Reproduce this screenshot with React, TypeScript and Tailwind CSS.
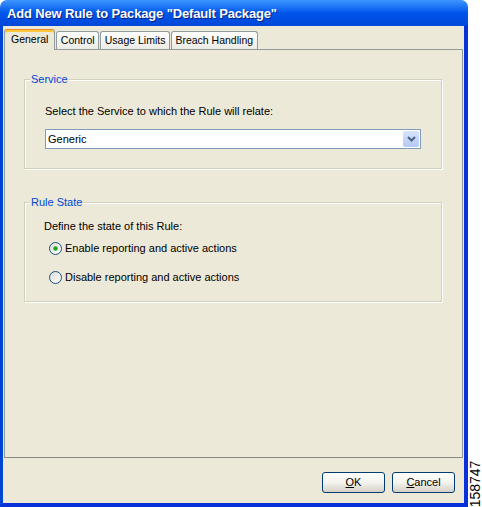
import React from "react";

const font = { fontFamily: '"Liberation Sans", Arial, sans-serif' };

function Radio({ checked }: { checked?: boolean }) {
  return (
    <svg width="13" height="13" viewBox="0 0 13 13" className="shrink-0">
      <defs>
        <linearGradient id={checked ? "rg1" : "rg2"} x1="0" y1="0" x2="1" y2="1">
          <stop offset="0" stopColor="#dcdcd5" />
          <stop offset="1" stopColor="#ffffff" />
        </linearGradient>
      </defs>
      <circle cx="6.5" cy="6.5" r="6" fill={`url(#${checked ? "rg1" : "rg2"})`} stroke="#1c5180" strokeWidth="1" />
      {checked && <circle cx="6.5" cy="6.5" r="2.2" fill="#21a121" />}
    </svg>
  );
}

function Group({ title, children, className }: { title: string; children: React.ReactNode; className?: string }) {
  return (
    <div className={"relative border border-[#d0d0bf] shadow-[inset_1px_1px_0_#ffffff,1px_1px_0_#ffffff] " + (className ?? "")}>
      <div className="absolute left-[5px] top-[-8px] bg-[#ece9d8] px-[1px] text-[11px] leading-[14px] text-[#0046d5]">{title}</div>
      {children}
    </div>
  );
}

function Tab({ label, active }: { label: string; active?: boolean }) {
  return active ? (
    <div className="relative z-10 -mb-px flex h-[21px] items-center rounded-t-[3px] border border-b-0 border-[#919b9c] border-t-[#e68b2c] bg-[#ece9d8] px-[6px] text-[10.5px] shadow-[inset_0_2px_0_#ffc73c]">
      {label}
    </div>
  ) : (
    <div className="mt-[2px] flex h-[18px] items-center rounded-t-[3px] border border-b-0 border-[#919b9c] bg-gradient-to-b from-[#ffffff] to-[#ecebe6] px-[3.5px] text-[10.5px]">
      {label}
    </div>
  );
}

function Btn({ children }: { children: React.ReactNode }) {
  return (
    <div className="flex h-[21px] w-[63px] items-center justify-center rounded-[3px] border border-[#003c74] bg-gradient-to-b from-[#ffffff] via-[#f4f3ee] to-[#d6d0c5] text-[11px]">
      {children}
    </div>
  );
}

export default function App() {
  return (
    <div className="flex h-[507px] w-[482px] bg-white text-black" style={font}>
      <div className="flex h-[507px] w-[468px] flex-col">
        <div className="flex h-[26px] shrink-0 items-center rounded-t-[7px] bg-gradient-to-b from-[#3d95ff] via-[#0055ea] to-[#0047d8] pl-[7px] pt-[1px]">
          <span className="text-[13px] font-bold tracking-[-0.15px] text-white [text-shadow:1px_1px_0_#0a1e7a]">
            Add New Rule to Package "Default Package"
          </span>
        </div>
        <div className="flex flex-1 flex-col border-x-[3px] border-b-[4px] border-x-[#0046d5] border-b-[#0831d9] border-r-[4px] border-r-[#0831d9] bg-[#ece9d8]">
          <div className="flex flex-col px-[1px] pt-[3px]">
            <div className="flex items-end">
              <Tab label="General" active />
              <div className="ml-[1px]"><Tab label="Control" /></div>
              <div className="ml-[1px]"><Tab label="Usage Limits" /></div>
              <div className="ml-[1px]"><Tab label="Breach Handling" /></div>
            </div>
            <div className="flex h-[409px] flex-col border border-[#919b9c] border-b-[#8a8a80] bg-[#ece9d8] pl-[19px] pr-[20px] pt-[29px]">
              <Group title="Service" className="h-[90px]">
                <div className="pl-[20px] pt-[24px] text-[11px] leading-[14px]">Select the Service to which the Rule will relate:</div>
                <div className="ml-[20px] mr-[20px] mt-[11px] flex h-[20px] items-center border border-[#7f9db9] bg-white">
                  <span className="flex-1 pl-[2px] text-[11px]">Generic</span>
                  <div className="mr-[1px] flex h-[16px] w-[16px] items-center justify-center rounded-[2px] bg-gradient-to-b from-[#d9e5fd] to-[#b4c8f6]">
                    <svg width="9" height="6" viewBox="0 0 9 6">
                      <path d="M1 1 L4.5 4.5 L8 1" fill="none" stroke="#4d6185" strokeWidth="2" />
                    </svg>
                  </div>
                </div>
              </Group>
              <Group title="Rule State" className="mt-[33px] h-[100px]">
                <div className="pl-[19px] pt-[16px] text-[11px] leading-[14px]">Define the state of this Rule:</div>
                <div className="mt-[8px] flex items-center gap-[3px] pl-[24px] text-[11px] leading-[14px]">
                  <Radio checked />
                  <span>Enable reporting and active actions</span>
                </div>
                <div className="mt-[15px] flex items-center gap-[3px] pl-[24px] text-[11px] leading-[14px]">
                  <Radio />
                  <span>Disable reporting and active actions</span>
                </div>
              </Group>
            </div>
          </div>
          <div className="flex flex-1 items-center justify-end gap-[7px] pr-[9px] pt-[4px]">
            <Btn><span className="underline">O</span>K</Btn>
            <Btn><span className="underline">C</span>ancel</Btn>
          </div>
        </div>
      </div>
      <div className="relative flex-1">
        <div className="absolute bottom-[16px] left-[-18px] w-[50px] origin-center -rotate-90 text-center text-[14px] leading-[14px] text-black" style={font}>
          158747
        </div>
      </div>
    </div>
  );
}
